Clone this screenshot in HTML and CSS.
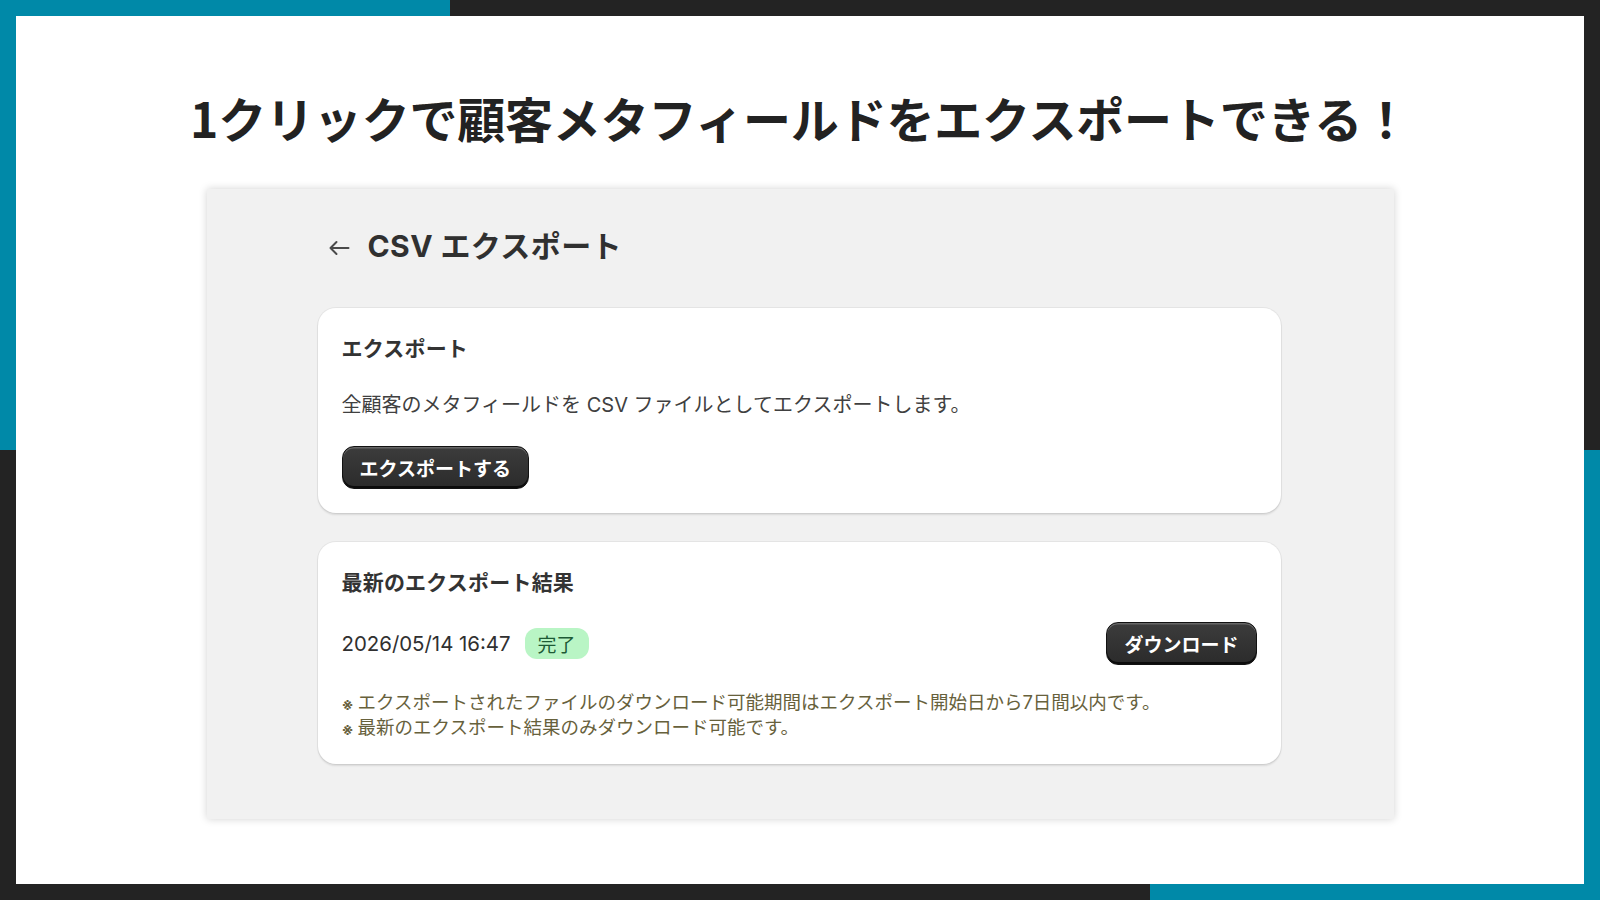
FILE: index.html
```html
<!DOCTYPE html>
<html lang="ja">
<head>
<meta charset="utf-8">
<title>CSV エクスポート</title>
<link rel="stylesheet" href="styles.css">
</head>
<body>
<div class="frame">
  <div class="sheet">
    <h1 class="headline">1クリックで顧客メタフィールドをエクスポートできる！</h1>
    <div class="panel">
      <div class="page-title">
        <svg class="back" width="22" height="16" viewBox="0 0 22 16" aria-hidden="true">
          <path d="M20.5 8H2.5M8.5 2L2.5 8L8.5 14" fill="none" stroke="#4a4a4a" stroke-width="2" stroke-linecap="round" stroke-linejoin="round"/>
        </svg>
        <span class="title-text">CSV エクスポート</span>
      </div>

      <section class="card card-export">
        <h2 class="card-heading">エクスポート</h2>
        <p class="card-desc">全顧客のメタフィールドを CSV ファイルとしてエクスポートします。</p>
        <button class="btn btn-export">エクスポートする</button>
      </section>

      <section class="card card-result">
        <h2 class="card-heading">最新のエクスポート結果</h2>
        <div class="result-row">
          <div class="result-info">
            <span class="result-date">2026/05/14 16:47</span>
            <span class="badge">完了</span>
          </div>
          <button class="btn btn-download">ダウンロード</button>
        </div>
        <div class="notes">
          <p class="note"><span class="kome">※</span>エクスポートされたファイルのダウンロード可能期間はエクスポート開始日から7日間以内です。</p>
          <p class="note"><span class="kome">※</span>最新のエクスポート結果のみダウンロード可能です。</p>
        </div>
      </section>
    </div>
  </div>
</div>
</body>
</html>
```

FILE: styles.css
```css
* { box-sizing: border-box; }

html, body {
  margin: 0;
  padding: 0;
}

body {
  width: 1600px;
  height: 900px;
  overflow: hidden;
  font-family: "Inter", "Noto Sans CJK JP", sans-serif;
}

.frame {
  width: 1600px;
  height: 900px;
  padding: 16px;
  background-color: #232323;
  background-image:
    linear-gradient(#0089a8, #0089a8),
    linear-gradient(#0089a8, #0089a8),
    linear-gradient(#0089a8, #0089a8),
    linear-gradient(#0089a8, #0089a8);
  background-repeat: no-repeat;
  background-size: 450px 16px, 16px 450px, 450px 16px, 16px 450px;
  background-position: left top, left top, right bottom, right bottom;
}

.sheet {
  width: 100%;
  height: 100%;
  background: #ffffff;
  display: flex;
  flex-direction: column;
  align-items: center;
  padding-top: 69px;
}

.headline {
  margin: 0;
  font-family: "Noto Sans CJK JP", sans-serif;
  font-weight: 700;
  font-size: 48px;
  line-height: 64px;
  color: #222222;
  letter-spacing: -0.2px;
}

.panel {
  margin-top: 40px;
  width: 1187px;
  height: 630px;
  background: #f1f1f1;
  box-shadow: 0 0 8px rgba(0, 0, 0, 0.18);
  padding: 35px 113px 0 111px;
  display: flex;
  flex-direction: column;
}

.page-title {
  height: 45px;
  display: flex;
  align-items: center;
  padding-left: 10px;
  gap: 18px;
  margin-bottom: 39px;
}

.back {
  display: block;
  margin-top: 2px;
}

.title-text {
  font-family: "Inter", "Noto Sans CJK JP", sans-serif;
  font-weight: 700;
  font-size: 30px;
  line-height: 45px;
  letter-spacing: 0.4px;
  color: #303030;
}

.card {
  background: #ffffff;
  border-radius: 18px;
  padding: 24px 24px 24px 24px;
  box-shadow: 0 0 0 1px rgba(0, 0, 0, 0.05), 0 2px 2px rgba(0, 0, 0, 0.10);
  color: #303030;
}

.card-result {
  margin-top: 29px;
}

.card-heading {
  margin: 0;
  font-family: "Noto Sans CJK JP", sans-serif;
  font-weight: 700;
  font-size: 21px;
  line-height: 30px;
  letter-spacing: 0.2px;
  color: #333333;
}

.card-desc {
  margin: 28px 0 0;
  font-family: "Inter", "Noto Sans CJK JP", sans-serif;
  font-size: 20px;
  line-height: 30px;
  color: #404040;
}

.btn {
  display: inline-flex;
  align-items: center;
  justify-content: center;
  height: 43px;
  padding: 0 17px;
  border: 1.5px solid #121212;
  border-radius: 12px;
  background: linear-gradient(#3c3c3c, #2b2b2b);
  box-shadow: inset 0 1.5px 0 rgba(255, 255, 255, 0.22), inset 0 -2px 0 #0c0c0c;
  color: #ffffff;
  font-family: "Noto Sans CJK JP", sans-serif;
  font-weight: 700;
  font-size: 19px;
  line-height: 1;
  cursor: pointer;
}

.btn-export {
  margin-top: 26px;
}

.result-row {
  margin-top: 26px;
  height: 43px;
  display: flex;
  align-items: center;
  justify-content: space-between;
}

.result-info {
  display: flex;
  align-items: center;
  gap: 14px;
}

.result-date {
  font-family: "Inter", "Noto Sans CJK JP", sans-serif;
  font-size: 20.4px;
  line-height: 30px;
  color: #303030;
}

.badge {
  display: inline-flex;
  align-items: center;
  height: 31px;
  padding: 0 13px;
  border-radius: 12px;
  background: #b9f5c5;
  color: #1d5a35;
  font-family: "Noto Sans CJK JP", sans-serif;
  font-size: 19px;
  line-height: 1;
}

.notes {
  margin-top: 25px;
}

.note {
  margin: 0;
  height: 25px;
  font-family: "Inter", "Noto Sans CJK JP", sans-serif;
  font-size: 18.5px;
  line-height: 25px;
  color: #67613c;
}

.kome {
  display: inline-block;
  width: 16px;
  font-size: 15px;
  line-height: 1;
  font-weight: 700;
  vertical-align: -1px;
}
```
